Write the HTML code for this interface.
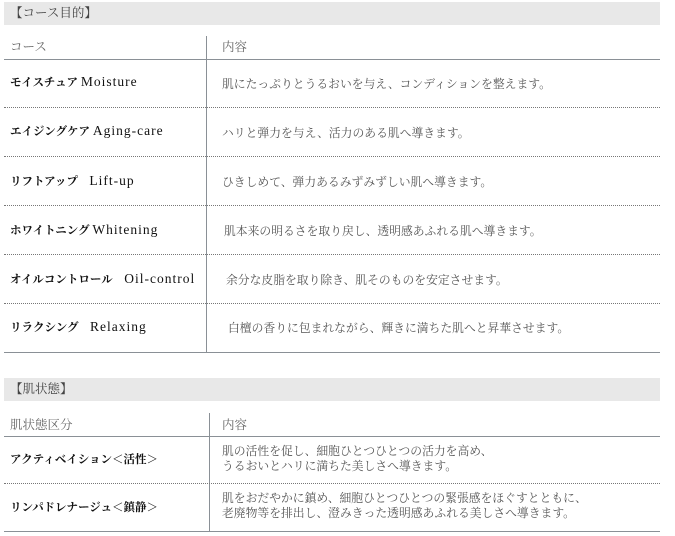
<html><head><style>
body{margin:0;width:675px;height:536px;background:#fff;font-family:"Liberation Serif","Noto Serif CJK SC",serif;position:relative;overflow:hidden}
.a{position:absolute;white-space:nowrap}
.bar{position:absolute;left:4px;width:656px;height:23px;background:#e8e8e8;color:#444;font-size:12.5px;line-height:23px;padding-left:6px;box-sizing:border-box}
.h{font-size:12.5px;color:#666}
.l{font-size:11.5px;color:#111;left:10px;font-weight:bold}
.l span{font-weight:normal;font-size:13.5px;letter-spacing:1px}
.r{font-size:11.8px;color:#555}
.sl{position:absolute;left:4px;width:656px;height:0;border-top:1.5px solid #8a9096}
.dl{position:absolute;left:4px;width:656px;height:0;border-top:1px dotted #777}
.v{position:absolute;width:0;border-left:1px solid #8a9096}
</style></head><body>
<div class="bar" style="top:2px">【コース目的】</div>
<div class="a h" style="left:10px;top:37px">コース</div>
<div class="a h" style="left:222px;top:37px">内容</div>
<div class="v" style="left:206px;top:36px;height:317px"></div>
<div class="sl" style="top:59px"></div>
<div class="a l" style="top:74px">モイスチュア <span>Moisture</span></div>
<div class="a r" style="left:222px;top:75px">肌にたっぷりとうるおいを与え、コンディションを整えます。</div>
<div class="dl" style="top:107px"></div>
<div class="a l" style="top:123px">エイジングケア <span>Aging-care</span></div>
<div class="a r" style="left:222px;top:124px">ハリと弾力を与え、活力のある肌へ導きます。</div>
<div class="dl" style="top:156px"></div>
<div class="a l" style="top:173px">リフトアップ　<span>Lift-up</span></div>
<div class="a r" style="left:222px;top:173px">ひきしめて、弾力あるみずみずしい肌へ導きます。</div>
<div class="dl" style="top:205px"></div>
<div class="a l" style="top:222px">ホワイトニング <span>Whitening</span></div>
<div class="a r" style="left:224px;top:222px">肌本来の明るさを取り戻し、透明感あふれる肌へ導きます。</div>
<div class="dl" style="top:254px"></div>
<div class="a l" style="top:271px">オイルコントロール　<span>Oil-control</span></div>
<div class="a r" style="left:226px;top:271px">余分な皮脂を取り除き、肌そのものを安定させます。</div>
<div class="dl" style="top:303px"></div>
<div class="a l" style="top:319px">リラクシング　<span>Relaxing</span></div>
<div class="a r" style="left:228px;top:319px">白檀の香りに包まれながら、輝きに満ちた肌へと昇華させます。</div>
<div class="sl" style="top:352px"></div>

<div class="bar" style="top:378px">【肌状態】</div>
<div class="a h" style="left:10px;top:415px">肌状態区分</div>
<div class="a h" style="left:222px;top:415px">内容</div>
<div class="v" style="left:209px;top:413px;height:118px"></div>
<div class="sl" style="top:436px"></div>
<div class="a l" style="top:451px">アクティベイション＜活性＞</div>
<div class="a r" style="left:222px;top:444px;line-height:15px">肌の活性を促し、細胞ひとつひとつの活力を高め、<br>うるおいとハリに満ちた美しさへ導きます。</div>
<div class="dl" style="top:483px"></div>
<div class="a l" style="top:499px">リンパドレナージュ＜鎮静＞</div>
<div class="a r" style="left:222px;top:491px;line-height:15px">肌をおだやかに鎮め、細胞ひとつひとつの緊張感をほぐすとともに、<br>老廃物等を排出し、澄みきった透明感あふれる美しさへ導きます。</div>
<div class="sl" style="top:531px"></div>
</body></html>
